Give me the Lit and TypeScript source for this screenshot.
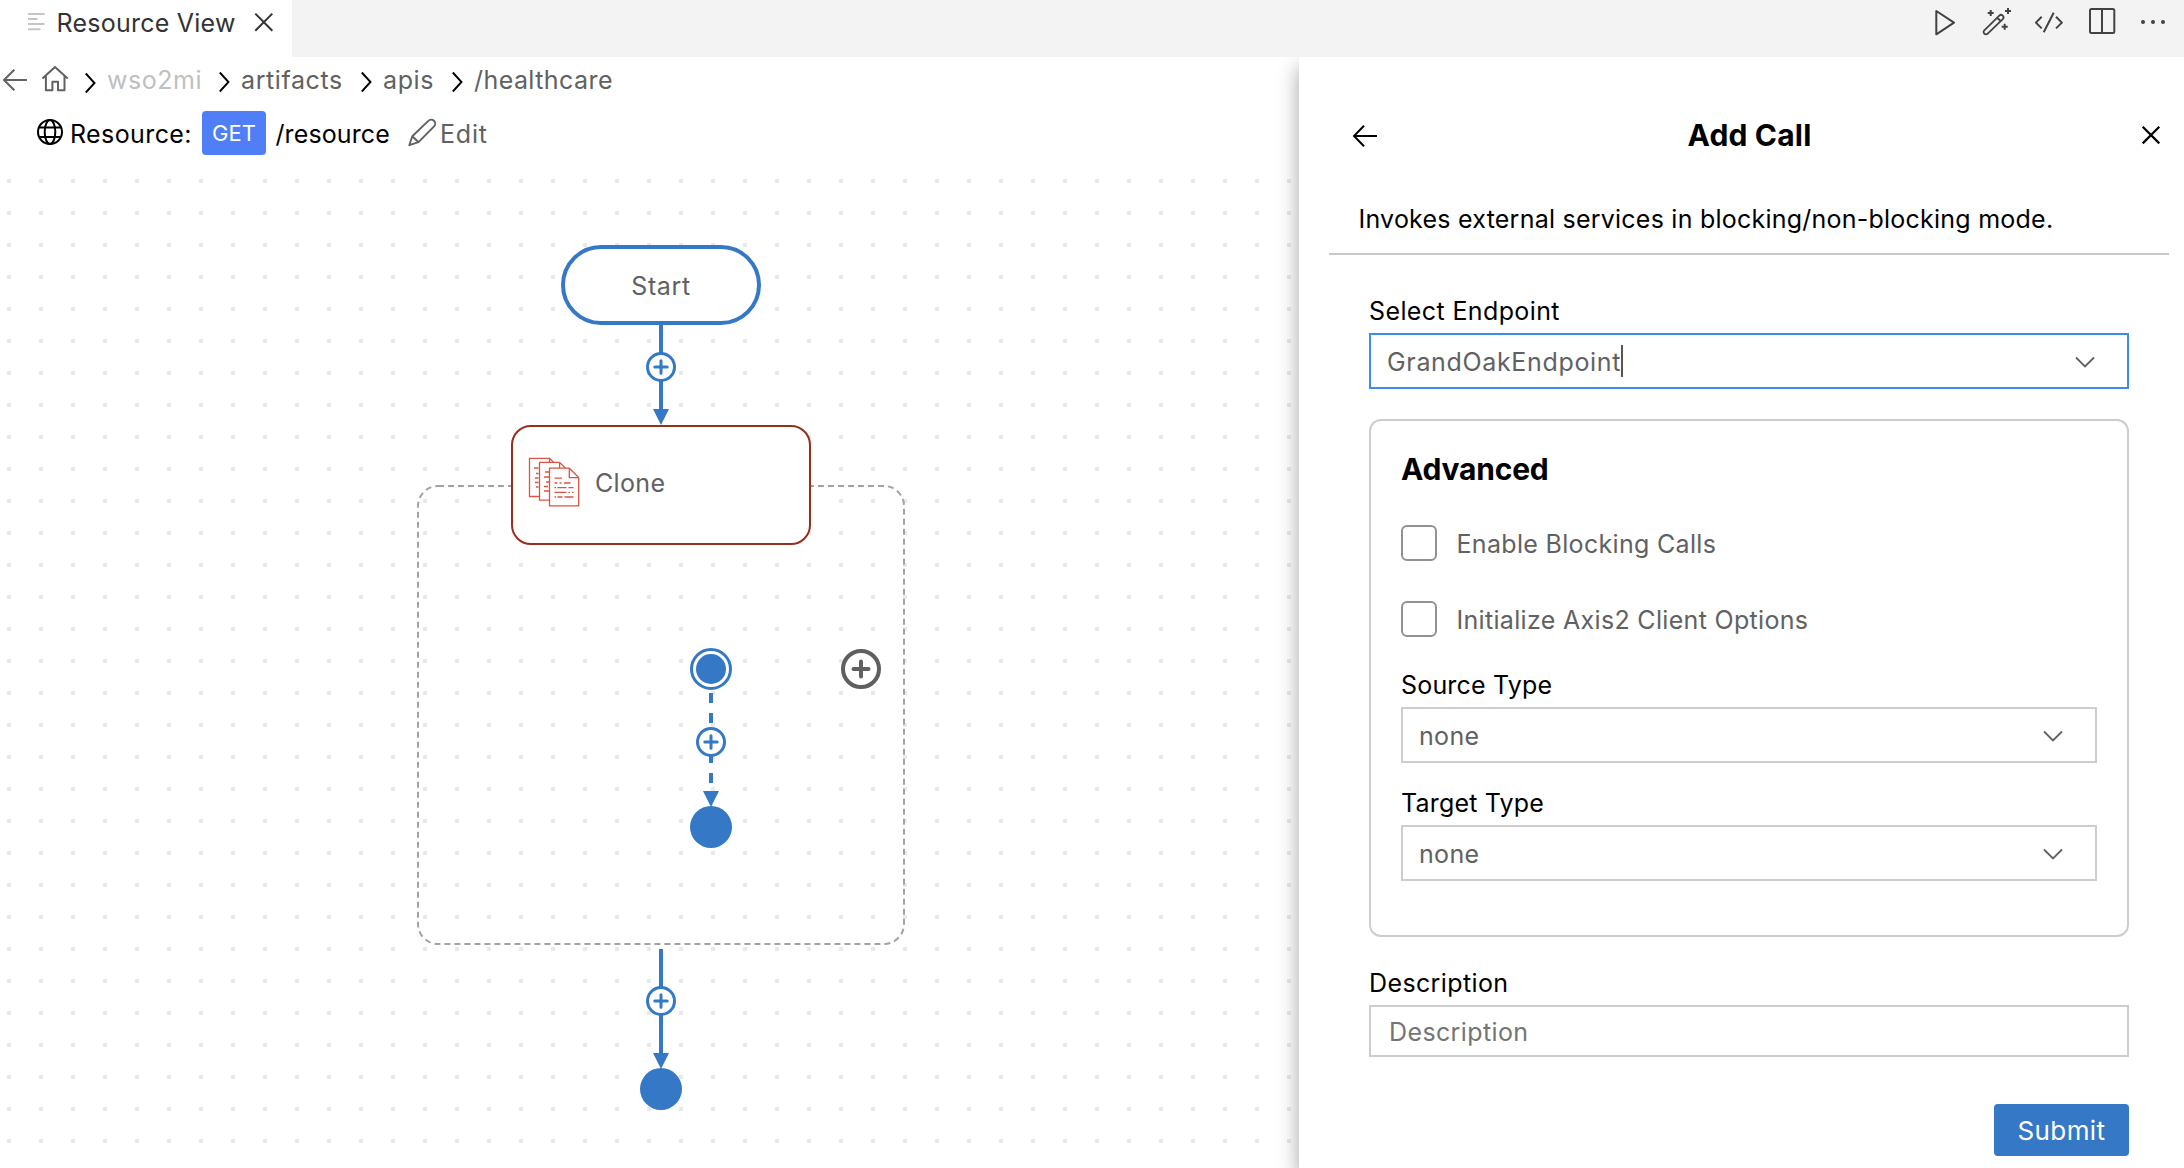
import { LitElement, html, css, svg } from "lit";
import { customElement, property } from "lit/decorators.js";

const plusNode = (x: number, y: number) => svg`
  <circle class="plus-ring" cx=${x} cy=${y} r="13.5"></circle>
  <path class="plus-arms" d="M${x - 6.2} ${y}h12.4M${x} ${y - 6.2}v12.4"></path>`;

const arrowHead = (x: number, y: number) => svg`<path class="solid" d="M${x - 8} ${y - 16}h16l-8 16z"></path>`;

const page = (x: number, y: number, w: number, h: number, f: number) => svg`
  <path class="page" d="M${x} ${y}H${x + w - f}L${x + w} ${y + f}V${y + h}H${x}zM${x + w - f} ${y}V${y + f}H${x + w}"></path>`;

const crumbArrow = (dy: number) => html`<svg width="12" height="32" viewBox="0 0 12 32" stroke="#000" stroke-width="1.9">
  <path d=${`M0.8 ${7.5 + dy}L9.5 ${17 + dy}L0.8 ${26.5 + dy}`}></path></svg>`;

@customElement("flow-canvas")
export class FlowCanvas extends LitElement {
  static styles = css`
    :host { display: block; flex: 1; min-height: 0; }
    svg { display: block; width: 1299px; height: 998px; font-family: Inter, "Liberation Sans", sans-serif; }
    .dot { fill: #e6eaee; }
    .line { stroke: #3478c6; stroke-width: 4; fill: none; }
    .broken { stroke-dasharray: 10 10; }
    .solid { fill: #3478c6; }
    .plus-ring { fill: #fff; stroke: #3478c6; stroke-width: 3; }
    .plus-arms { stroke: #3478c6; stroke-width: 3; stroke-linecap: round; }
    .start { fill: #fff; stroke: #3478c6; stroke-width: 4; }
    .clone { fill: #fff; stroke: #962f1e; stroke-width: 2; }
    .scope { fill: none; stroke: #a3a3a3; stroke-width: 2; stroke-dasharray: 6 4; }
    .ring { fill: #fff; stroke: #3478c6; stroke-width: 3; }
    .add-ring { fill: #fff; stroke: #5f5f5f; stroke-width: 4; }
    .add-arms { stroke: #5f5f5f; stroke-width: 4; stroke-linecap: round; }
    .page { fill: #fff; stroke: #da5443; stroke-width: 1.3; }
    .script { stroke: #da5443; stroke-width: 1.3; fill: none; }
    .name { fill: #616161; font-size: 25px; letter-spacing: 0.6px; }
    .clone-name { letter-spacing: 0.35px; }
  `;

  render() {
    return html`<svg viewBox="0 170 1299 998">
      <defs>
        <pattern id="dots" x="7" y="179" width="32" height="32" patternUnits="userSpaceOnUse">
          <rect class="dot" width="4" height="4"></rect>
        </pattern>
      </defs>
      <rect x="0" y="170" width="1299" height="998" fill="url(#dots)"></rect>
      <rect class="scope" x="418" y="486" width="486" height="458" rx="20"></rect>

      <path class="line" d="M661 325V410M661 949V1054"></path>
      <path class="line broken" d="M711 693V791"></path>

      <rect class="start" x="563" y="247" width="196" height="76" rx="38"></rect>
      <text class="name" x="661" y="295" text-anchor="middle">Start</text>
      ${plusNode(661, 367)} ${arrowHead(661, 425)}

      <rect class="clone" x="512" y="426" width="298" height="118" rx="19"></rect>
      ${page(529.5, 458.3, 29.3, 38.2, 9.2)} ${page(539.5, 462.4, 29.3, 37.8, 9.2)} ${page(549.5, 468.2, 29.2, 37.6, 9.4)}
      <path class="script" d="M534 468h4.500M536 473.500h2.500M535 478h3.500M535 482.500h3.500M536 487h2.500M545 472h4M544 477h5M546 482h3M544 486.500h4M544 491h5"></path>
      <path class="script" d="M554.500 478.200h7.500M554.500 483h3M559.500 483h2M564 483h6.500M554.500 487.700h1.500M557.500 487.700h9M568.500 487.700h5M554.500 492.300h12M568.500 492.300h1.500M572 492.300h1.500M554.500 497h1.500M557.500 497h5M564.500 497h9"></path>
      <text class="name clone-name" x="595" y="492">Clone</text>

      <circle class="ring" cx="711" cy="669" r="19.500"></circle>
      <circle class="solid" cx="711" cy="669" r="15"></circle>
      ${plusNode(711, 742)} ${arrowHead(711, 807)}
      <circle class="solid" cx="711" cy="827" r="21"></circle>

      <circle class="add-ring" cx="861" cy="669" r="18"></circle>
      <path class="add-arms" d="M853.500 669h15M861 661.500v15"></path>

      ${plusNode(661, 1001)} ${arrowHead(661, 1069)}
      <circle class="solid" cx="661" cy="1089" r="21"></circle>
    </svg>`;
  }
}

@customElement("select-field")
export class SelectField extends LitElement {
  @property() label = "";
  @property() value = "";
  @property({ type: Boolean, reflect: true }) active = false;

  static styles = css`
    :host { display: block; color: #000; font-size: 25px; line-height: 32px; white-space: nowrap; }
    .label { display: block; height: 32px; letter-spacing: 0.18px; }
    .box { box-sizing: border-box; height: 56px; margin-top: 6px; border: 2px solid #cdcdcd; display: flex; align-items: center;
      justify-content: space-between; padding: 1px 32px 0 16px; color: #616161; background: #fff; }
    .value { display: flex; align-items: center; letter-spacing: 0.35px; }
    :host([active]) .box { border-color: #3c8eea; }
    :host([active]) .label { letter-spacing: 0.38px; }
    :host([active]) .value { letter-spacing: 0.66px; }
    .caret { width: 2px; height: 32px; background: #555; margin-top: -1px; }
    svg { width: 20px; height: 12px; fill: none; stroke: #616161; stroke-width: 1.8; }
  `;

  render() {
    return html`<span class="label">${this.label}</span>
      <div class="box">
        <span class="value"><span>${this.value}</span>${this.active ? html`<span class="caret"></span>` : ""}</span>
        <svg viewBox="0 0 20 12"><path d="M1 1.500L10 10.500L19 1.500"></path></svg>
      </div>`;
  }
}

@customElement("app-root")
export class AppRoot extends LitElement {
  static styles = css`
    :host { display: flex; flex-direction: column; width: 2184px; height: 1168px; overflow: hidden; background: #fff;
      font-family: Inter, "Liberation Sans", sans-serif; font-size: 25px; line-height: 32px; color: #000; white-space: nowrap; }
    svg { display: block; fill: none; }
    .tabs { height: 57px; background: #f3f3f3; display: flex; justify-content: space-between; flex: none; }
    .tab { box-sizing: border-box; width: 292px; background: #fff; color: #333; display: grid; grid-template-columns: 28.5px 196.5px 1fr;
      padding: 7px 0 0 28px; letter-spacing: 0.24px; }
    .actions { padding-top: 6px; padding-right: 18px; }
    .body { flex: 1; min-height: 0; display: flex; }
    .main { width: 1299px; display: flex; flex-direction: column; }
    .head { height: 113px; flex: none; }
    .crumbs { display: grid; grid-template-columns: 42px 43px 22px 112px 22px 120px 22px 69px 22px auto; padding-top: 7px; height: 32px;
      color: #616161; letter-spacing: 0.6px; }
    .muted { color: #c0c0c0; letter-spacing: 0.55px; }
    .last { letter-spacing: 0.43px; }
    .resource { display: grid; grid-template-columns: 33px 132px 73.5px 132.5px 32px auto; padding: 15px 0 0 37px; height: 44px; letter-spacing: 0.4px; }
    .resource > * { margin-top: 7px; }
    .resource > .badge { margin-top: 0; width: 64px; height: 44px; background: #4f7ef6; border-radius: 4px; color: #fff; font-size: 22px;
      line-height: 44px; text-align: center; letter-spacing: 0; }
    .path { letter-spacing: 0.1px; }
    .edit { color: #616161; letter-spacing: 0.8px; }
    .panel { box-sizing: border-box; width: 885px; background: #fff; box-shadow: 0 10px 20px rgba(0, 0, 0, 0.36);
      clip-path: inset(0 0 0 -30px); position: relative; }
    .bar { display: grid; grid-template-columns: 98px 1fr 82px; padding: 57px 0 0 0; height: 44px; align-items: center; }
    .title { font-size: 30px; font-weight: 700; text-align: center; line-height: 44px; letter-spacing: 0.18px; margin-top: -2px; }
    .intro { margin: 45px 15px 0 30px; padding-left: 29.500px; height: 50px; border-bottom: 2px solid #c8c8c8; letter-spacing: 0.235px; }
    .form { padding: 40px 55px 0 70px; display: flex; flex-direction: column; }
    .group { box-sizing: border-box; height: 518px; margin-top: 30px; border: 2px solid #cdcdcd; border-radius: 12px; padding: 26px 30px 0 30px; }
    .group-title { font-size: 30px; font-weight: 700; line-height: 44px; letter-spacing: -0.2px; }
    .check { display: grid; grid-template-columns: 55.500px auto; height: 36px; align-items: center; color: #616161; letter-spacing: 0.32px; }
    .check.first { margin-top: 34px; }
    .check.second { margin: 40px 0 32px; }
    .option { padding-top: 2px; }
    .tick { box-sizing: border-box; width: 36px; height: 36px; border: 2px solid #919191; border-radius: 6px; }
    .target { margin-top: 24px; }
    .desc { margin-top: 30px; letter-spacing: 0.38px; }
    .input { box-sizing: border-box; height: 52px; border: 2px solid #cdcdcd; margin-top: 6px; padding: 9px 18px; color: #757575; letter-spacing: 0.38px; }
    .submit { align-self: flex-end; box-sizing: border-box; margin-top: 47px; width: 135px; height: 52px; padding-top: 1px; border-radius: 4px;
      background: #3478c6; color: #fff; line-height: 52px; text-align: center; font-size: 26px; letter-spacing: 0.4px; }
  `;

  render() {
    return html`
      <div class="tabs">
        <div class="tab">
          <svg width="18" height="32" viewBox="28 7 18 32" stroke="#c5c5c5" stroke-width="2"><path d="M28 14h16.500M28 19h9.500M28 24h16.500M28 29.300h12.500"></path></svg>
          <span>Resource View</span>
          <svg width="22" height="32" viewBox="253 7 22 32" stroke="#333" stroke-width="2"><path d="M255.300 13.600L272.300 30.700M272.300 13.600L255.300 30.700"></path></svg>
        </div>
        <svg class="actions" width="236" height="32" viewBox="1930 6 236 32" stroke="#424242" stroke-width="2" stroke-linejoin="round">
          <path d="M1936.300 11L1954 22.700L1936.300 34.300z"></path>
          <path d="M1984.300 33.600a2.300 2.300 0 0 1 0-3.300L1999.300 15.700a2.400 2.400 0 0 1 3.500 3.400L1987.700 33.600a2.300 2.300 0 0 1-3.400 0zM1997.500 18l3 3" stroke-width="1.800"></path>
          <path d="M1990.700 10v6M1987.700 13h6M2008 8v6M2005 11h6M2004.700 23.700v6M2001.700 26.700h6"></path>
          <path d="M2041.700 16.700L2035.900 22.600L2041.700 28.400M2053.700 12.700L2043.700 32.300M2056 16.700L2061.900 22.600L2056 28.400"></path>
          <rect x="2090" y="9" width="24.300" height="24" rx="1.500"></rect><path d="M2102 9v24"></path>
          <g fill="#424242" stroke="none"><circle cx="2143" cy="22" r="2"></circle><circle cx="2153" cy="22" r="2"></circle><circle cx="2163" cy="22" r="2"></circle></g>
        </svg>
      </div>
      <div class="body">
        <div class="main">
          <div class="head">
            <div class="crumbs">
              <svg width="30" height="32" viewBox="0 64 30 32" stroke="#616161" stroke-width="2"><path d="M27 80H4M14.300 69.700L4 80L14.300 90.300"></path></svg>
              <svg width="28" height="32" viewBox="42 64 28 32" stroke="#616161" stroke-width="2" stroke-linejoin="round"><path d="M42.500 78.500L55 67L67.700 78.500M45.900 76V90.300H52.400V81.700H58V90.300H64.500V76"></path></svg>
              ${crumbArrow(2)}
              <span class="muted">wso2mi</span>
              ${crumbArrow(1)}
              <span>artifacts</span>
              ${crumbArrow(1)}
              <span>apis</span>
              ${crumbArrow(1)}
              <span class="last">/healthcare</span>
            </div>
            <div class="resource">
              <svg width="28" height="32" viewBox="37 118 28 32" stroke="#000" stroke-width="2"><circle cx="50" cy="132" r="12"></circle><ellipse cx="50" cy="132" rx="5.300" ry="12"></ellipse><path d="M39 127.400h22M39 137h22"></path></svg>
              <span>Resource:</span>
              <span class="badge">GET</span>
              <span class="path">/resource</span>
              <svg width="30" height="32" viewBox="408 118 30 32" stroke="#616161" stroke-width="1.900" stroke-linejoin="round"><path d="M409.300 145.200L412.300 136.300L428.300 120.900a3.900 3.900 0 0 1 5.800 5.500L418.500 142.200zM412.300 136.300L418.500 142.200"></path></svg>
              <span class="edit">Edit</span>
            </div>
          </div>
          <flow-canvas></flow-canvas>
        </div>
        <div class="panel">
          <div class="bar">
            <svg width="80" height="44" viewBox="1299 114 80 44" stroke="#000" stroke-width="2"><path d="M1377 136H1354M1364 125.700L1354 136L1364 146.300"></path></svg>
            <span class="title">Add Call</span>
            <svg width="80" height="44" viewBox="2102 114 80 44" stroke="#000" stroke-width="2.200"><path d="M2142.700 126.700L2159.300 143.400M2159.300 126.700L2142.700 143.400"></path></svg>
          </div>
          <div class="intro">Invokes external services in blocking/non-blocking mode.</div>
          <div class="form">
            <select-field label="Select Endpoint" value="GrandOakEndpoint" active></select-field>
            <div class="group">
              <div class="group-title">Advanced</div>
              <div class="check first"><span class="tick"></span><span class="option">Enable Blocking Calls</span></div>
              <div class="check second"><span class="tick"></span><span class="option">Initialize Axis2 Client Options</span></div>
              <select-field label="Source Type" value="none"></select-field>
              <select-field class="target" label="Target Type" value="none"></select-field>
            </div>
            <div class="desc">Description</div>
            <div class="input">Description</div>
            <div class="submit">Submit</div>
          </div>
        </div>
      </div>
    `;
  }
}
